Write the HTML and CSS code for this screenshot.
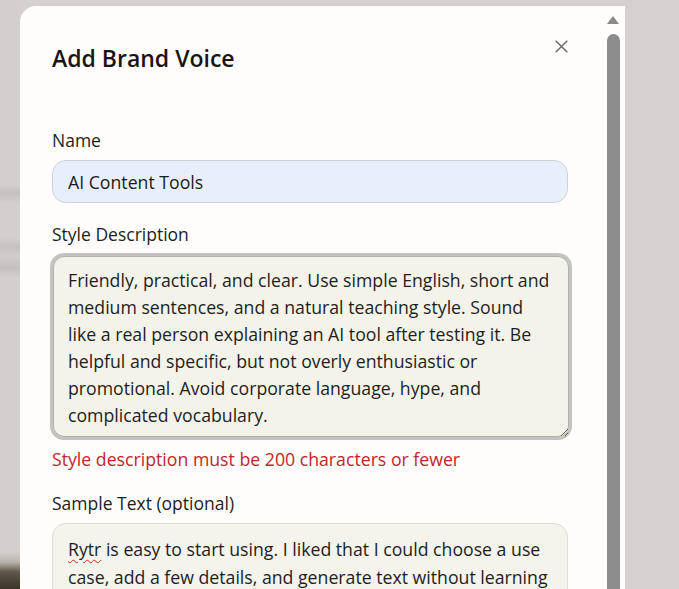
FILE: index.html
```html
<!DOCTYPE html>
<html lang="en">
<head>
<meta charset="utf-8">
<title>Add Brand Voice</title>
<link rel="stylesheet" href="styles.css">
</head>
<body>
<div class="backdrop">
  <div class="modal">
    <div class="modal-body">
      <div class="modal-head">
        <h2 class="title">Add Brand Voice</h2>
        <button class="close" aria-label="Close">
          <svg width="13" height="13" viewBox="0 0 13 13"><path d="M0.7 0.7 L12.3 12.3 M12.3 0.7 L0.7 12.3" stroke="#6b6b6b" stroke-width="1.5" fill="none"/></svg>
        </button>
      </div>
      <label class="label label-name">Name</label>
      <input class="input" type="text" value="AI Content Tools">
      <label class="label label-style">Style Description</label>
      <textarea class="area" rows="6" spellcheck="false">Friendly, practical, and clear. Use simple English, short and medium sentences, and a natural teaching style. Sound like a real person explaining an AI tool after testing it. Be helpful and specific, but not overly enthusiastic or promotional. Avoid corporate language, hype, and complicated vocabulary.</textarea>
      <p class="error">Style description must be 200 characters or fewer</p>
      <label class="label label-sample">Sample Text (optional)</label>
      <div class="sample" role="textbox" aria-multiline="true"><span class="misspelt">Rytr</span> is easy to start using. I liked that I could choose a use case, add a few details, and generate text without learning anything complicated first.</div>
    </div>
    <div class="scrollbar">
      <div class="scroll-arrow"></div>
      <div class="scroll-thumb"></div>
    </div>
  </div>
</div>
</body>
</html>
```
FILE: styles.css
```css
* { box-sizing: border-box; }
html, body { margin: 0; height: 100%; overflow: hidden; }
body {
  background: #d5d1d0;
  font-family: "Open Sans", "Noto Sans", sans-serif;
  color: #1b1b1b;
}
.backdrop {
  height: 589px;
  padding: 6px 0 0 20px;
  background:
    linear-gradient(to bottom, #d3cfce 0, #d3cfce 185px, #c4c0bf 193px, #d3cfce 203px, #d3cfce 238px, #c6c2c1 246px, #d1cdcc 256px, #c5c1c0 268px, #d3cfce 278px, #d3cfce 552px, #b9b4ac 562px, #5d5849 572px, #3a3526 589px) no-repeat 0 0 / 20px 100%;
}
.modal {
  width: 605px;
  height: 583px;
  background: #fefdfc;
  border-radius: 16px 0 0 0;
  display: flex;
  overflow: hidden;
}
.modal-body {
  width: 548px;
  padding: 36px 0 0 32px;
  display: flex;
  flex-direction: column;
}
.modal-body > * { flex-shrink: 0; }
.modal-head {
  display: flex;
  justify-content: space-between;
  align-items: flex-start;
}
.title {
  margin: 0;
  font-size: 23px;
  line-height: 32px;
  font-weight: 600;
  color: #1a1414;
}
.close {
  border: 0;
  background: none;
  padding: 0;
  margin-top: -2px;
  width: 13px;
  height: 13px;
  display: flex;
}
.label {
  font-size: 17.5px;
  line-height: 24px;
  color: #1d1d1d;
}
.label-name { margin-top: 54px; }
.label-style { margin-top: 19px; }
.label-sample { margin-top: 18px; }
.input {
  margin-top: 8px;
  height: 43px;
  border: 1px solid #cfd1d8;
  border-radius: 14px;
  background: #e8effc;
  font-family: inherit;
  font-size: 17.7px;
  color: #1b1b1b;
  padding: 0 15px;
  outline: none;
}
.area {
  margin-top: 7px;
  margin-left: -2px;
  margin-right: -4px;
  height: 187px;
  border: 3px solid #c3c3c0;
  box-shadow: inset 0 0 0 1px #b0b0ad;
  border-radius: 14px;
  background: #f3f3ea;
  font-family: inherit;
  font-size: 17.72px;
  line-height: 27px;
  color: #1e1e1e;
  padding: 11px 16px 8px 15px;
  resize: vertical;
  outline: none;
  overflow: hidden;
}
.error {
  margin: 6px 0 0;
  font-size: 17.7px;
  line-height: 27px;
  color: #c0262d;
}
.sample {
  margin-top: 8px;
  border: 1px solid #dedcd4;
  border-radius: 14px;
  background: #f4f3ec;
  font-size: 17.7px;
  line-height: 28px;
  color: #1e1e1e;
  padding: 11px 14px 12px 15px;
}
.misspelt {
  text-decoration: underline wavy #d42a2a;
  text-decoration-thickness: 1px;
  text-underline-offset: 3px;
}
.scrollbar {
  width: 57px;
  padding: 10px 0 0 39px;
  display: flex;
  flex-direction: column;
}
.scroll-arrow {
  width: 0;
  height: 0;
  border-left: 6px solid transparent;
  border-right: 6px solid transparent;
  border-bottom: 8px solid #8a8a8a;
}
.scroll-thumb {
  margin-top: 10px;
  width: 13px;
  flex: 1;
  background: #8c8c8c;
  border-radius: 7px 7px 0 0;
}
```
